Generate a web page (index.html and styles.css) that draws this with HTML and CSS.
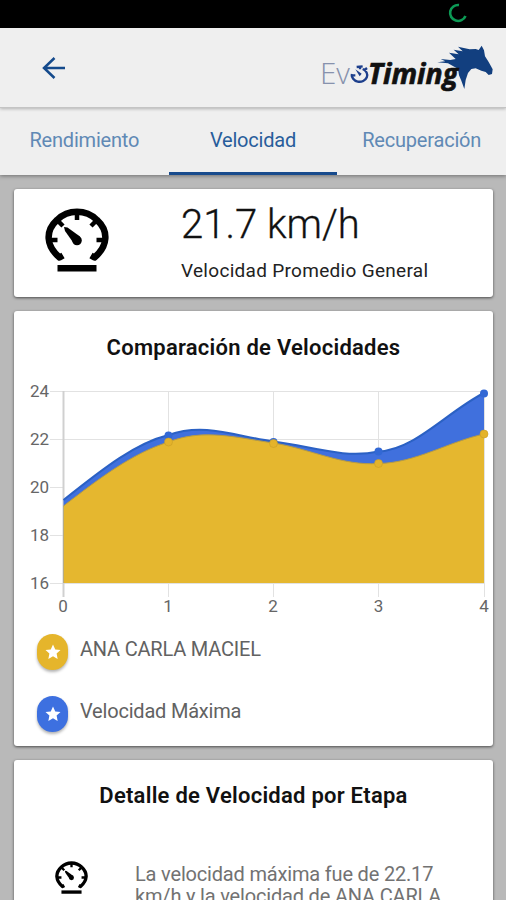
FILE: index.html
```html
<!DOCTYPE html>
<html lang="es">
<head>
    <meta charset="UTF-8">
    <meta name="viewport" content="width=device-width, initial-scale=1.0">
    <title>EvoTiming</title>
    <link rel="stylesheet" href="styles.css">
</head>
<body>
    <!-- shared icons -->
    <svg class="icon-defs" width="0" height="0">
        <symbol id="gauge" viewBox="0 0 64 64">
            <path d="M18 47.500L14.500 49.500C1 38 0 23 12 12A28.500 28.500 0 0 1 52 12C64 23 63 38 49.500 49.500L46 47.500" fill="none" stroke="currentColor" stroke-width="6.500" stroke-linejoin="round"/>
            <path d="M5 32h7.500M59 32h-7.500M32 5v7M13.500 13.500l4.500 4.500M50.500 13.500l-4.500 4.500" fill="none" stroke="currentColor" stroke-width="4.500"/>
            <circle cx="32" cy="32.500" r="4.800" fill="currentColor"/>
            <path d="M19 19l3.500.5 12.500 9-6.500 6.500-8.500-12z" fill="currentColor"/>
            <path d="M12.500 57h39v6.500h-39z" fill="currentColor"/>
        </symbol>
        <symbol id="star" viewBox="0 0 24 24">
            <path d="M12 2l3 6.500 7 .8-5.200 4.800 1.400 7.100L12 17.600l-6.200 3.600 1.400-7.100L2 9.300l7-.8z" fill="#fff"/>
        </symbol>
    </svg>

    <div class="status-bar">
        <svg width="20" height="20" viewBox="0 0 20 20">
            <path d="M11 2A8 8 0 1 0 17.500 13" fill="none" stroke="#0c9a55" stroke-width="2.600"/>
        </svg>
    </div>

    <header class="toolbar">
        <svg class="back" width="24" height="24" viewBox="0 0 24 24">
            <path d="M23 12H2M12.500 2L2 12l10.500 10" fill="none" stroke="#144a8c" stroke-width="2.500"/>
        </svg>
        <svg class="logo" width="180" height="54" viewBox="48 120 540 162">
            <text x="60" y="251" class="logo-evo" textLength="90" lengthAdjust="spacingAndGlyphs">Ev</text>
            <g fill="none" stroke="#1d3f8c" stroke-width="7">
                <path d="M156 222a23 20 0 1 0 32-15M152 226h14M170 201l18-2M180 200v8M194 210l7-6"/>
            </g>
            <path d="M166 208l19 13-6 8z" fill="#1d3f8c"/>
            <path d="M545 137l7 14 3 18 11 17 12 22-2 14-10 3-9-9-13-4-17-7-13 2-10 12-7 21-4 27-9-25-7-16-3-20-14-7-16-9-32-3 24-3-14-7 29 3 16-3-20-19 29 5-15-14 27 5-14-14 35 8 18-1 9 3z" fill="#123f7f"/>
            <text x="204" y="251" class="logo-timing" textLength="270" lengthAdjust="spacingAndGlyphs">Timing</text>
        </svg>
    </header>

    <nav class="tabs">
        <a class="tab">Rendimiento</a>
        <a class="tab active">Velocidad</a>
        <a class="tab">Recuperación</a>
    </nav>

    <main class="content">
        <section class="card summary">
            <svg class="summary-icon" width="64" height="64"><use href="#gauge"/></svg>
            <div>
                <div class="speed">21.7 km/h</div>
                <div class="speed-label">Velocidad Promedio General</div>
            </div>
        </section>

        <section class="card comparison">
            <h2>Comparación de Velocidades</h2>
            <svg class="chart" width="479" height="240" viewBox="14 380 479 240">
                <path class="grid" d="M50 391.500H484M50 439.500H484M50 487.500H64M50 535.500H64M50 583.500H484M168.500 391V597M273.500 391V597M378.500 391V597M484.500 391V597"/>
                <path class="axis" d="M63.500 391V597"/>
                <path class="max" d="M63.500 500C105 467 136 443 168.500 435C205 422 238 437 273.500 441.500C311 446 343 459 378.500 451.500C415 450 448 411 484 393V583H63.500Z"/>
                <path class="max-line" d="M63.500 500C105 467 136 443 168.500 435C205 422 238 437 273.500 441.500C311 446 343 459 378.500 451.500C415 450 448 411 484 393"/>
                <g class="max-dots">
                    <circle cx="168.500" cy="435.500" r="4"/>
                    <circle cx="273.500" cy="442" r="4"/>
                    <circle cx="378.500" cy="451.500" r="4"/>
                    <circle cx="484" cy="393.500" r="4"/>
                </g>
                <path class="rider" d="M63.500 506C101 477 133 453 168.500 442C204 428 238 438 273.500 443C311 449 342 466 378.500 463.500C415 463 448 442 484 434V583H63.500Z"/>
                <path class="rider-line" d="M63.500 506C101 477 133 453 168.500 442C204 428 238 438 273.500 443C311 449 342 466 378.500 463.500C415 463 448 442 484 434"/>
                <g class="rider-dots">
                    <circle cx="168.500" cy="442" r="4"/>
                    <circle cx="273.500" cy="443.500" r="4"/>
                    <circle cx="378.500" cy="463.500" r="4"/>
                    <circle cx="484" cy="434" r="4"/>
                </g>
                <g class="labels-y">
                    <text x="49" y="397">24</text>
                    <text x="49" y="445">22</text>
                    <text x="49" y="493">20</text>
                    <text x="49" y="540.500">18</text>
                    <text x="49" y="588.500">16</text>
                </g>
                <g class="labels-x">
                    <text x="63" y="612">0</text>
                    <text x="168" y="612">1</text>
                    <text x="273" y="612">2</text>
                    <text x="378.500" y="612">3</text>
                    <text x="484" y="612">4</text>
                </g>
            </svg>
            <ul class="legend">
                <li>
                    <span class="badge yellow"><svg width="18" height="18"><use href="#star"/></svg></span>
                    <span class="name">ANA CARLA MACIEL</span>
                </li>
                <li>
                    <span class="badge blue"><svg width="18" height="18"><use href="#star"/></svg></span>
                    <span class="name">Velocidad Máxima</span>
                </li>
            </ul>
        </section>

        <section class="card detail">
            <h2>Detalle de Velocidad por Etapa</h2>
            <div class="detail-row">
                <svg class="detail-icon" width="33" height="33"><use href="#gauge"/></svg>
                <p>La velocidad máxima fue de 22.17<br>km/h y la velocidad de ANA CARLA</p>
            </div>
        </section>
    </main>
</body>
</html>
```
FILE: styles.css
```css
* {
    margin: 0;
    padding: 0;
    box-sizing: border-box;
}

body {
    width: 506px;
    height: 900px;
    overflow: hidden;
    font-family: Roboto, "Liberation Sans", sans-serif;
    background-color: #b9b9b9;
    color: #111;
}

.icon-defs {
    display: block;
}

.status-bar {
    height: 28px;
    padding: 3px 38px 0 0;
    background-color: #000;
    text-align: right;
}

.toolbar {
    position: relative;
    display: flex;
    justify-content: space-between;
    align-items: flex-start;
    height: 80px;
    padding: 12px 10px 0 42px;
    background-color: #efefef;
    border-bottom: 1px solid #c4c4c4;
    box-shadow: 0 1px 3px rgba(0, 0, 0, 0.25);
}

.back {
    margin-top: 16px;
}

.logo-evo {
    font-family: "Open Sans", sans-serif;
    font-weight: 300;
    font-size: 86px;
    fill: #8792ad;
}

.logo-timing {
    font-family: "Open Sans", sans-serif;
    font-weight: 700;
    font-style: italic;
    font-size: 86px;
    fill: #111;
    stroke: #111;
    stroke-width: 2;
}

.tabs {
    display: flex;
    height: 67px;
    background-color: #efefef;
    box-shadow: 0 1px 4px rgba(0, 0, 0, 0.4);
}

.tab {
    flex: 1;
    padding-top: 20px;
    text-align: center;
    font-size: 20px;
    line-height: 24px;
    letter-spacing: -0.2px;
    color: #6089b5;
}

.tab.active {
    color: #285d9b;
    border-bottom: 3px solid #174a8c;
}

.content {
    display: flex;
    flex-direction: column;
    gap: 14px;
    padding: 14px 13px 0 14px;
}

.card {
    flex: none;
    background-color: #fff;
    border-radius: 3px;
    box-shadow: 0 1px 3px rgba(0, 0, 0, 0.6);
}

.summary {
    display: flex;
    height: 108px;
    padding: 13px 0 0 31px;
}

.summary-icon {
    margin: 6px 72px 0 0;
    color: #000;
    overflow: visible;
}

.speed {
    font-size: 40px;
    font-weight: 300;
    line-height: 46px;
    letter-spacing: 0;
    -webkit-text-stroke: 0.3px #111;
}

.speed-label {
    margin-top: 11px;
    font-size: 19px;
    line-height: 24px;
    letter-spacing: 0.3px;
    color: #222;
}

.card h2 {
    text-align: center;
    font-size: 22px;
    font-weight: 600;
    line-height: 26px;
    letter-spacing: 0.25px;
}

.comparison {
    height: 435px;
    padding-top: 24px;
}

.chart {
    display: block;
    margin-top: 19px;
}

.chart path {
    fill: none;
}

.chart .grid {
    stroke: #e2e2e2;
}

.chart .axis {
    stroke: #d0d0d0;
    stroke-width: 2;
}

.chart .max {
    fill: #4070dd;
}

.chart .max-line {
    stroke: #2b61c4;
    stroke-width: 2;
}

.chart .rider {
    fill: #e5b72f;
}

.chart .rider-line {
    stroke: #b59a45;
}

.max-dots {
    fill: #3268d5;
}

.rider-dots {
    fill: #e4b32a;
    stroke: #c99d25;
    stroke-width: 0.6;
}

.labels-y, .labels-x {
    font-size: 17px;
    fill: #666;
    text-anchor: end;
}

.labels-x {
    text-anchor: middle;
}

.legend {
    list-style: none;
    padding: 14px 0 0 23px;
}

.legend li {
    display: flex;
    align-items: flex-start;
    gap: 12px;
    height: 62px;
}

.badge {
    display: flex;
    justify-content: center;
    align-items: center;
    width: 31px;
    height: 36px;
    border-radius: 16px;
    box-shadow: 0 2px 3px rgba(0, 0, 0, 0.3);
}

.yellow {
    background-color: #e5b52b;
}

.blue {
    background-color: #3d70e0;
}

.name {
    padding-top: 3px;
    font-size: 20px;
    line-height: 24px;
    letter-spacing: -0.2px;
    color: #626262;
}

.detail {
    height: 220px;
    padding-top: 23px;
}

.detail-row {
    display: flex;
    align-items: flex-start;
    padding: 51px 0 0 41px;
}

.detail-icon {
    margin: 1px 47px 0 0;
    color: #000;
}

.detail-row p {
    padding-top: 3px;
    font-size: 20px;
    line-height: 22px;
    letter-spacing: -0.18px;
    color: #727272;
}
```
